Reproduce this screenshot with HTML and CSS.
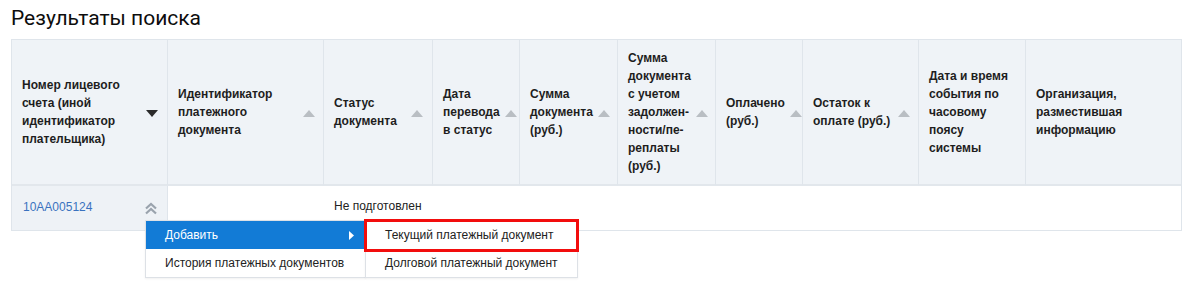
FILE: index.html
```html
<!DOCTYPE html>
<html lang="ru">
<head>
<meta charset="utf-8">
<title>Результаты поиска</title>
<link rel="stylesheet" href="styles.css">
</head>
<body>
<h1 class="title">Результаты поиска</h1>
<div class="grid-wrap">
  <table class="grid">
    <colgroup>
      <col class="c156"><col class="c156"><col class="c109"><col class="c87"><col class="c98"><col class="c98"><col class="c87"><col class="c116"><col class="c107"><col class="c155">
    </colgroup>
    <thead>
      <tr>
        <th class="pr9"><div class="hc"><span class="ht">Номер лицевого<br>счета (иной<br>идентификатор<br>плательщика)</span><svg class="sort" width="12" height="7" viewBox="0 0 12 7"><path d="M0 0H12L6 7Z" fill="#2b2b2b"/></svg></div></th>
        <th class="pr8"><div class="hc"><span class="ht">Идентификатор<br>платежного<br>документа</span><svg class="sort" width="12" height="7" viewBox="0 0 12 7"><path d="M0 7H12L6 0Z" fill="#b9bec3"/></svg></div></th>
        <th class="pr9"><div class="hc"><span class="ht">Статус<br>документа</span><svg class="sort" width="12" height="7" viewBox="0 0 12 7"><path d="M0 7H12L6 0Z" fill="#b9bec3"/></svg></div></th>
        <th class="pr4"><div class="hc"><span class="ht">Дата<br>перевода<br>в статус</span><svg class="sort" width="12" height="7" viewBox="0 0 12 7"><path d="M0 7H12L6 0Z" fill="#b9bec3"/></svg></div></th>
        <th class="pr8"><div class="hc"><span class="ht">Сумма<br>документа<br>(руб.)</span><svg class="sort" width="12" height="7" viewBox="0 0 12 7"><path d="M0 7H12L6 0Z" fill="#b9bec3"/></svg></div></th>
        <th class="pr8"><div class="hc"><span class="ht">Сумма<br>документа<br>с учетом<br>задолжен-<br>ности/пе-<br>реплаты<br>(руб.)</span><svg class="sort" width="12" height="7" viewBox="0 0 12 7"><path d="M0 7H12L6 0Z" fill="#b9bec3"/></svg></div></th>
        <th class="pr2"><div class="hc"><span class="ht">Оплачено<br>(руб.)</span><svg class="sort" width="12" height="7" viewBox="0 0 12 7"><path d="M0 7H12L6 0Z" fill="#b9bec3"/></svg></div></th>
        <th class="pr8"><div class="hc"><span class="ht">Остаток к<br>оплате (руб.)</span><svg class="sort" width="12" height="7" viewBox="0 0 12 7"><path d="M0 7H12L6 0Z" fill="#b9bec3"/></svg></div></th>
        <th class="pr8"><div class="hc"><span class="ht">Дата и время<br>события по<br>часовому<br>поясу<br>системы</span></div></th>
        <th class="pr8 last"><div class="hc"><span class="ht">Организация,<br>разместившая<br>информацию</span></div></th>
      </tr>
    </thead>
    <tbody>
      <tr>
        <td class="first"><div class="first-in"><a class="acc" href="#">10AA005124</a><svg class="chev" width="14" height="13" viewBox="0 0 14 13"><path d="M2 6.5L7 2L12 6.5M2 11.5L7 7L12 11.5" fill="none" stroke="#9aa3ad" stroke-width="2.2"/></svg></div></td>
        <td></td>
        <td>Не подготовлен</td>
        <td></td><td></td><td></td><td></td><td></td><td></td><td></td>
      </tr>
    </tbody>
  </table>

  <div class="menu">
    <div class="mi active">Добавить<svg class="marrow" width="5" height="9" viewBox="0 0 5 9"><path d="M0 0L5 4.5L0 9Z" fill="#fff"/></svg></div>
    <div class="mi">История платежных документов</div>
    <div class="submenu">
      <div class="si">Текущий платежный документ</div>
      <div class="si">Долговой платежный документ</div>
      <div class="hl"></div>
    </div>
  </div>
</div>
</body>
</html>
```
FILE: styles.css
```css
html, body {
  margin: 0;
  padding: 0;
  background: #ffffff;
}
body {
  font-family: "Liberation Sans", Arial, sans-serif;
  font-size: 12px;
  color: #222;
  min-height: 293px;
}
.title {
  margin: 0;
  padding: 5px 12px 0 11px;
  font-family: Roboto, "Liberation Sans", sans-serif;
  font-weight: 400;
  font-size: 21px;
  line-height: 26px;
  height: 34px;
  color: #0d0d0d;
}
.grid-wrap {
  position: relative;
  margin-left: 11px;
  width: 1171px;
  padding-bottom: 62px;
}
.grid {
  table-layout: fixed;
  border-collapse: separate;
  border-spacing: 0;
  width: 1171px;
  border: 1px solid #dfe5eb;
}
.c156 { width: 156px; }
.c155 { width: 155px; }
.c109 { width: 109px; }
.c87 { width: 87px; }
.c98 { width: 98px; }
.c116 { width: 116px; }
.c107 { width: 107px; }
.grid th {
  background: #eff3f7;
  height: 146px;
  padding: 0 8px 0 10px;
  border-right: 1px solid #dfe5eb;
  border-bottom: 2px solid #e2e7ec;
  vertical-align: middle;
  text-align: left;
  font-weight: 700;
  font-size: 12px;
  line-height: 18px;
  color: #1e1e1e;
  box-sizing: border-box;
}
.grid th.last { border-right: 0; }
.grid th.pr9 { padding-right: 9px; }
.grid th.pr8 { padding-right: 8px; }
.grid th.pr4 { padding-right: 4px; }
.grid th.pr2 { padding-right: 2px; }
.hc {
  display: flex;
  align-items: center;
  justify-content: space-between;
  gap: 5px;
}
.ht {
  white-space: nowrap;
}
.sort {
  flex: none;
  display: block;
  margin-top: 2px;
}
.grid td {
  height: 43px;
  box-sizing: border-box;
  padding: 11px 10px 14px 10px;
  vertical-align: top;
  line-height: 18px;
  font-size: 12px;
  color: #222;
  white-space: nowrap;
}
.grid td.first {
  background: #eef2f6;
  border-right: 1px solid #dfe5eb;
  padding-top: 12px;
  padding-right: 9px;
}
.first-in {
  display: flex;
  align-items: center;
  justify-content: space-between;
}
.acc {
  color: #3a72bf;
  text-decoration: none;
  padding-left: 1px;
}
.chev {
  display: block;
  margin-top: 2px;
}
.menu {
  position: absolute;
  left: 134px;
  top: 181px;
  width: 219px;
  background: #fff;
  border: 1px solid #dde1e6;
  box-shadow: 0 1px 2px rgba(0,0,0,0.06);
}
.mi {
  height: 28px;
  line-height: 28px;
  padding-left: 19px;
  font-size: 12px;
  color: #222;
  display: flex;
  align-items: center;
  justify-content: space-between;
  padding-right: 11px;
}
.mi.active {
  background: #127bd6;
  color: #fff;
}
.marrow { display: block; }
.submenu {
  position: absolute;
  left: 219px;
  top: -1px;
  width: 211px;
  background: #fff;
  border: 1px solid #dde1e6;
  box-shadow: 0 1px 2px rgba(0,0,0,0.06);
}
.si {
  height: 28px;
  line-height: 28px;
  padding-left: 19px;
  font-size: 12px;
  color: #222;
  white-space: nowrap;
}
.hl {
  position: absolute;
  left: -2px;
  top: -2px;
  width: 215px;
  height: 33px;
  box-sizing: border-box;
  border: 3px solid #f20d0d;
}
```
